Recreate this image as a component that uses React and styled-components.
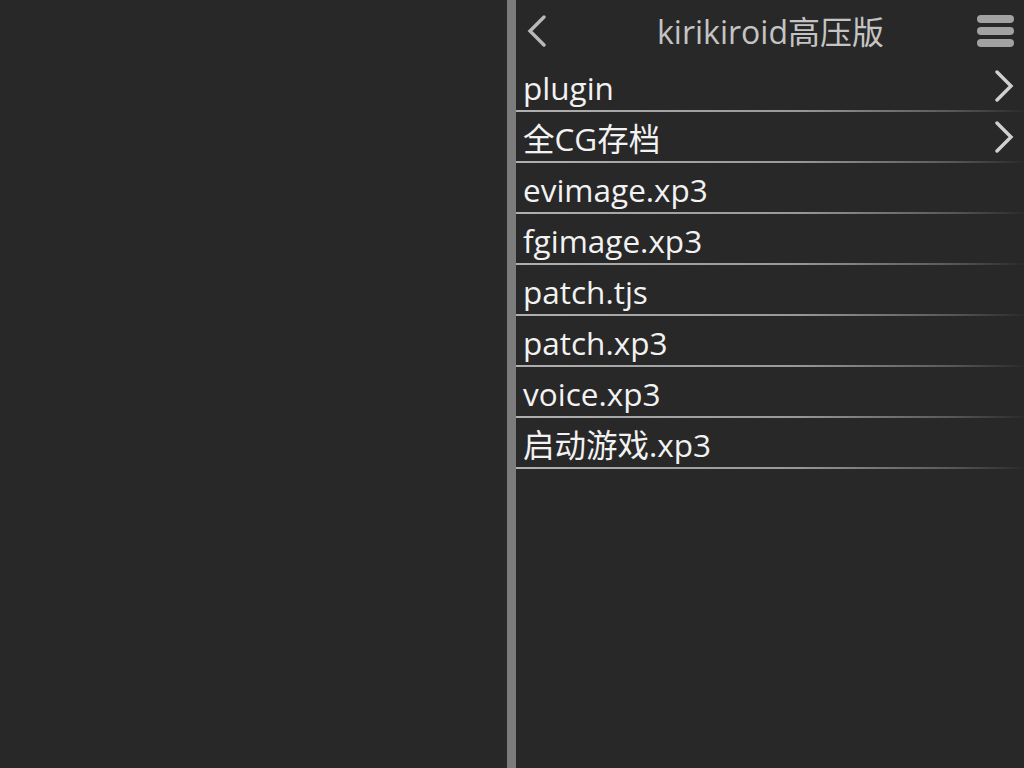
import React from 'react'
import styled, { createGlobalStyle } from 'styled-components'

const GlobalStyle = createGlobalStyle`
  html, body {
    margin: 0;
    padding: 0;
    background: #282828;
  }
  body {
    font-family: "Open Sans", "Noto Sans CJK SC", sans-serif;
  }
`

const Screen = styled.div`
  display: flex;
  width: 1024px;
  height: 768px;
  background: #282828;
  overflow: hidden;
`

const LeftPane = styled.div`
  width: 507px;
  background: #282828;
`

const Divider = styled.div`
  width: 9px;
  background: #7c7c7c;
`

const Browser = styled.div`
  flex: 1;
  display: flex;
  flex-direction: column;
`

const TitleBar = styled.div`
  height: 61px;
  display: flex;
  align-items: center;
  justify-content: space-between;
  padding: 0 10px 0 11px;
`

const Title = styled.div`
  flex: 1;
  text-align: center;
  color: #c4c4c4;
  font-size: 32px;
  line-height: 1;
  padding-top: 2px;
`

const IconButton = styled.div`
  width: 40px;
  height: 40px;
  display: flex;
  align-items: center;
  justify-content: ${({ align }) => align || 'center'};
`

const MenuBars = styled.div`
  display: flex;
  flex-direction: column;
  gap: 4px;
  width: 37px;
`

const Bar = styled.span`
  display: block;
  height: 8px;
  border-radius: 4px;
  background: #a2a2a2;
`

const List = styled.ul`
  list-style: none;
  margin: 0;
  padding: 0;
`

const Row = styled.li`
  height: 49px;
  display: flex;
  align-items: center;
  justify-content: space-between;
  padding: 0 10px 0 7px;
  color: #f2f2f2;
  font-size: 31.5px;
  border-bottom: 2px solid transparent;
  border-image: linear-gradient(to right, #b0b0b0 0%, #999 55%, #5a5a5a 85%, #2a2a2a 100%) 1;
`

const Label = styled.span`
  line-height: 1;
  padding-top: 4px;
`

const Chevron = ({ dir, color }) => (
  <svg width="20" height="32" viewBox="0 0 20 32">
    <path
      d={dir === 'left' ? 'M17 2 L3 16 L17 30' : 'M3 2 L17 16 L3 30'}
      fill="none"
      stroke={color}
      strokeWidth="3.4"
      strokeLinecap="round"
      strokeLinejoin="miter"
    />
  </svg>
)

const entries = [
  { name: 'plugin', folder: true },
  { name: '全CG存档', folder: true },
  { name: 'evimage.xp3' },
  { name: 'fgimage.xp3' },
  { name: 'patch.tjs' },
  { name: 'patch.xp3' },
  { name: 'voice.xp3' },
  { name: '启动游戏.xp3' },
]

export default function App() {
  return (
    <>
      <GlobalStyle />
      <Screen>
        <LeftPane />
        <Divider />
        <Browser>
          <TitleBar>
            <IconButton align="flex-start">
              <Chevron dir="left" color="#b8b8b8" />
            </IconButton>
            <Title>kirikiroid高压版</Title>
            <IconButton align="flex-end">
              <MenuBars>
                <Bar />
                <Bar />
                <Bar />
              </MenuBars>
            </IconButton>
          </TitleBar>
          <List>
            {entries.map((e) => (
              <Row key={e.name}>
                <Label>{e.name}</Label>
                {e.folder && <Chevron dir="right" color="#d0d0d0" />}
              </Row>
            ))}
          </List>
        </Browser>
      </Screen>
    </>
  )
}
